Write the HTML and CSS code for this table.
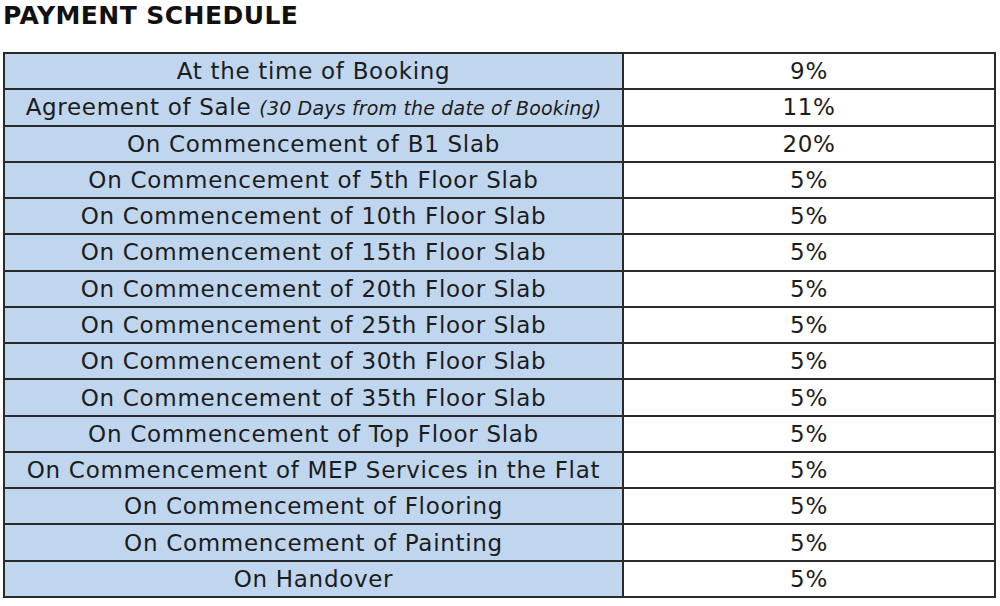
FILE: index.html
```html
<!DOCTYPE html>
<html>
<head>
<meta charset="utf-8">
<link rel="stylesheet" href="styles.css">
</head>
<body>
<div class="page">
  <h1 class="title">PAYMENT SCHEDULE</h1>
  <table class="schedule">
    <colgroup><col class="c1"><col class="c2"></colgroup>
    <tbody>
      <tr><td class="stage">At the time of Booking</td><td class="pct">9%</td></tr>
      <tr><td class="stage">Agreement of Sale <em class="note">(30 Days from the date of Booking)</em></td><td class="pct">11%</td></tr>
      <tr><td class="stage">On Commencement of B1 Slab</td><td class="pct">20%</td></tr>
      <tr><td class="stage">On Commencement of 5th Floor Slab</td><td class="pct">5%</td></tr>
      <tr><td class="stage">On Commencement of 10th Floor Slab</td><td class="pct">5%</td></tr>
      <tr><td class="stage">On Commencement of 15th Floor Slab</td><td class="pct">5%</td></tr>
      <tr><td class="stage">On Commencement of 20th Floor Slab</td><td class="pct">5%</td></tr>
      <tr><td class="stage">On Commencement of 25th Floor Slab</td><td class="pct">5%</td></tr>
      <tr><td class="stage">On Commencement of 30th Floor Slab</td><td class="pct">5%</td></tr>
      <tr><td class="stage">On Commencement of 35th Floor Slab</td><td class="pct">5%</td></tr>
      <tr><td class="stage">On Commencement of Top Floor Slab</td><td class="pct">5%</td></tr>
      <tr><td class="stage">On Commencement of MEP Services in the Flat</td><td class="pct">5%</td></tr>
      <tr><td class="stage">On Commencement of Flooring</td><td class="pct">5%</td></tr>
      <tr><td class="stage">On Commencement of Painting</td><td class="pct">5%</td></tr>
      <tr><td class="stage">On Handover</td><td class="pct">5%</td></tr>
    </tbody>
  </table>
</div>
</body>
</html>
```
FILE: styles.css
```css
html, body {
  margin: 0;
  padding: 0;
  background: #ffffff;
}
.page {
  padding: 3px 0 0 3px;
  font-family: "DejaVu Sans", Verdana, sans-serif;
  color: #1c1c1c;
}
.title {
  margin: 0;
  font-size: 25px;
  font-weight: bold;
  line-height: 26px;
  color: #111;
  letter-spacing: 0.45px;
}
.schedule {
  margin-top: 23px;
  width: 991px;
  border-collapse: collapse;
  table-layout: fixed;
  border: 2px solid #2a2a2a;
}
.c1 { width: 619px; }
.c2 { width: 372px; }
.schedule td {
  border: 2px solid #2a2a2a;
  height: 34.27px;
  padding: 0;
  text-align: center;
  vertical-align: middle;
  font-size: 23px;
  letter-spacing: 0.7px;
  line-height: 26px;
  white-space: nowrap;
}
.stage {
  background: #bfd6ee;
}
.pct {
  background: #ffffff;
  font-size: 24px;
}
.note {
  font-size: 19px;
  letter-spacing: 0.17px;
  font-style: italic;
}
```
